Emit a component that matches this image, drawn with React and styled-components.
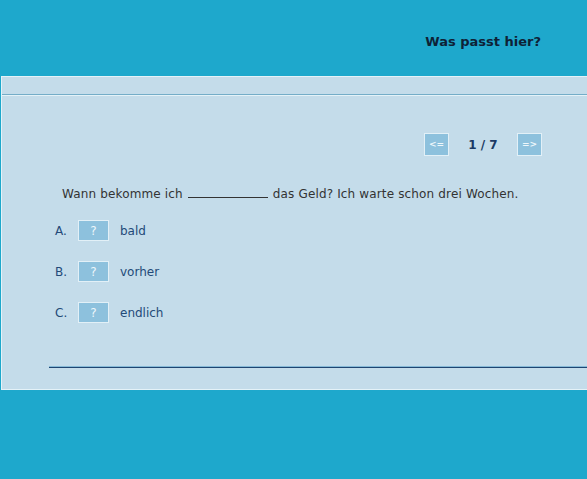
import React from "react";
import styled, { createGlobalStyle } from "styled-components";

const GlobalStyle = createGlobalStyle`
  html, body {
    margin: 0;
    padding: 0;
    background: #1ea8cc;
    overflow: hidden;
  }
  body {
    font-family: "DejaVu Sans", Verdana, sans-serif;
  }
`;

const Page = styled.div`
  width: 587px;
  height: 479px;
  background: #1ea8cc;
`;

const TopBar = styled.header`
  height: 76px;
  display: flex;
  justify-content: flex-end;
  align-items: flex-start;
  padding-right: 46px;
  box-sizing: border-box;

  h1 {
    margin: 33px 0 0;
    font-size: 13px;
    font-weight: bold;
    color: #0e2236;
    line-height: 18px;
  }
`;

const Panel = styled.section`
  margin-left: 1px;
  background: #c4dcea;
  border-top: 1px solid #e4f2f8;
  border-left: 1px solid #e4f2f8;
  border-bottom: 1px solid #e4f2f8;
  box-sizing: border-box;
`;

const PanelHead = styled.div`
  height: 17px;
  border-bottom: 1px solid #74adc8;
  box-shadow: 0 1px 0 #e4f2f8;
`;

const PanelBody = styled.div`
  padding: 38px 0 21px;
`;

const Nav = styled.div`
  display: flex;
  justify-content: flex-end;
  align-items: center;
  padding-right: 45px;
`;

const NavButton = styled.button`
  width: 25px;
  height: 23px;
  padding: 0;
  border: 1px solid #e2f0f7;
  background: #8dc1dd;
  color: #eef7fb;
  font-family: "DejaVu Sans", Verdana, sans-serif;
  font-size: 9px;
  font-weight: bold;
  line-height: 21px;
`;

const Count = styled.span`
  width: 68px;
  text-align: center;
  font-size: 12px;
  font-weight: bold;
  color: #1b3a64;
`;

const Question = styled.p`
  margin: 29px 0 0;
  padding-left: 60px;
  font-size: 12px;
  line-height: 16px;
  color: #333;
  letter-spacing: 0.15px;

  .blank {
    display: inline-block;
    width: 80px;
    border-bottom: 1px solid #333;
    height: 12px;
    vertical-align: baseline;
    margin: 0 1px;
  }
`;

const Options = styled.ol`
  list-style: none;
  margin: 18px 0 0;
  padding: 0 0 0 53px;
  display: flex;
  flex-direction: column;
  gap: 20px;
`;

const Option = styled.li`
  display: flex;
  align-items: center;
  height: 21px;
  font-size: 12px;
  color: #234a78;

  .letter {
    width: 23px;
  }

  .word {
    margin-left: 11px;
  }
`;

const AnswerBox = styled.span`
  width: 31px;
  height: 21px;
  box-sizing: border-box;
  border: 1px solid #e2f0f7;
  background: #8dc1dd;
  color: #eef7fb;
  font-size: 12px;
  display: flex;
  align-items: center;
  justify-content: center;
`;

const Rule = styled.hr`
  margin: 44px 0 0 47px;
  border: 0;
  height: 1px;
  background: #1e4572;
  box-shadow: 0 -1px 0 #86b9d6;
`;

const options = [
  ["A.", "bald"],
  ["B.", "vorher"],
  ["C.", "endlich"],
];

export default function App() {
  return (
    <Page>
      <GlobalStyle />
      <TopBar>
        <h1>Was passt hier?</h1>
      </TopBar>
      <Panel>
        <PanelHead />
        <PanelBody>
          <Nav>
            <NavButton>&lt;=</NavButton>
            <Count>1 / 7</Count>
            <NavButton>=&gt;</NavButton>
          </Nav>
          <Question>
            Wann bekomme ich <span className="blank" /> das Geld? Ich warte schon drei Wochen.
          </Question>
          <Options>
            {options.map(([letter, word]) => (
              <Option key={letter}>
                <span className="letter">{letter}</span>
                <AnswerBox>?</AnswerBox>
                <span className="word">{word}</span>
              </Option>
            ))}
          </Options>
          <Rule />
        </PanelBody>
      </Panel>
    </Page>
  );
}
